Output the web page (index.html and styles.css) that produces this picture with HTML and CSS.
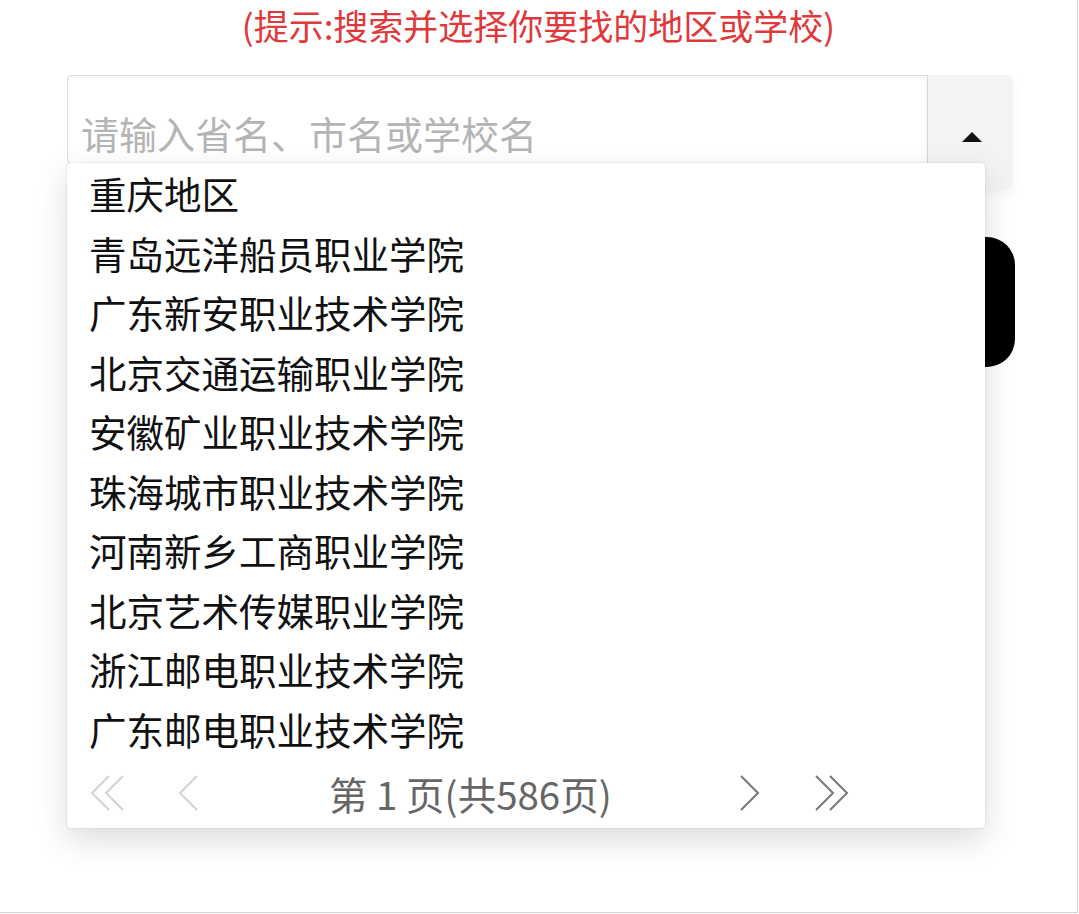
FILE: index.html
```html
<!DOCTYPE html>
<html lang="zh-CN">

<head>
    <meta charset="UTF-8">
    <meta name="viewport" content="width=device-width, initial-scale=1.0">
    <title>选择学校</title>
    <link rel="stylesheet" href="styles.css">
</head>

<body>
    <div class="page">
        <p class="hint">(提示:搜索并选择你要找的地区或学校)</p>

        <div class="picker">
            <div class="picker-row">
                <input type="text" class="picker-input" placeholder="请输入省名、市名或学校名">
                <button class="picker-toggle"><span class="caret"></span></button>
            </div>

            <button class="submit-btn"></button>

            <!-- 下拉列表 -->
            <div class="dropdown">
                <ul class="options">
                    <li>重庆地区</li>
                    <li>青岛远洋船员职业学院</li>
                    <li>广东新安职业技术学院</li>
                    <li>北京交通运输职业学院</li>
                    <li>安徽矿业职业技术学院</li>
                    <li>珠海城市职业技术学院</li>
                    <li>河南新乡工商职业学院</li>
                    <li>北京艺术传媒职业学院</li>
                    <li>浙江邮电职业技术学院</li>
                    <li>广东邮电职业技术学院</li>
                </ul>

                <div class="pager">
                    <span class="pager-btn first disabled">
                        <svg width="36" height="36" viewBox="0 0 36 36"><polyline points="19,1 2,18 19,35" /><polyline points="33,1 16,18 33,35" /></svg>
                    </span>
                    <span class="pager-btn prev disabled">
                        <svg width="20" height="36" viewBox="0 0 20 36"><polyline points="19,1 2,18 19,35" /></svg>
                    </span>
                    <span class="pager-text">第 1 页(共586页)</span>
                    <span class="pager-btn next">
                        <svg width="20" height="36" viewBox="0 0 20 36"><polyline points="1,1 18,18 1,35" /></svg>
                    </span>
                    <span class="pager-btn last">
                        <svg width="36" height="36" viewBox="0 0 36 36"><polyline points="3,1 20,18 3,35" /><polyline points="17,1 34,18 17,35" /></svg>
                    </span>
                </div>
            </div>
        </div>
    </div>
</body>

</html>
```

FILE: styles.css
```css
body {
    margin: 0;
    padding: 0;
    background-color: #fff;
    font-family: "Noto Sans CJK SC", "Noto Sans", sans-serif;
}

.page {
    box-sizing: border-box;
    width: 1078px;
    height: 913px;
    border-right: 1px solid #d4d4d4;
    border-bottom: 1px solid #d4d4d4;
    overflow: hidden;
}

.hint {
    margin: 0;
    padding-top: 4px;
    text-align: center;
    font-size: 35px;
    line-height: 42px;
    color: #e0393b;
}

.picker {
    position: relative;
    width: 948px;
    margin: 29px 0 0 67px;
}

.picker-row {
    display: flex;
    align-items: flex-start;
}

.picker-input {
    box-sizing: border-box;
    width: 861px;
    height: 89px;
    padding: 26px 13px 0;
    border: 1px solid #dcdcdc;
    border-radius: 4px 0 0 4px;
    font-family: inherit;
    font-size: 38px;
    color: #333;
    outline: none;
    box-shadow: inset 0 2px 3px rgba(0, 0, 0, 0.04);
}

.picker-input::placeholder {
    color: #b4b4b4;
}

.picker-toggle {
    width: 85px;
    height: 115px;
    padding: 57px 0 0 3px;
    border: none;
    border-radius: 0 8px 8px 0;
    background-color: #f3f3f3;
    box-shadow: 0 4px 10px rgba(0, 0, 0, 0.05);
    display: flex;
    justify-content: center;
    align-items: flex-start;
    box-sizing: border-box;
}

.caret {
    width: 0;
    height: 0;
    border-left: 10px solid transparent;
    border-right: 10px solid transparent;
    border-bottom: 10px solid #111;
}

.submit-btn {
    display: block;
    width: 948px;
    height: 130px;
    margin-top: 47px;
    border: none;
    border-radius: 28px;
    background-color: #000;
}

.dropdown {
    position: absolute;
    top: 88px;
    left: 0;
    width: 918px;
    height: 665px;
    background-color: #fff;
    border-radius: 4px;
    box-shadow: 0 0 2px rgba(0, 0, 0, 0.18), 0 12px 32px rgba(0, 0, 0, 0.14);
}

.options {
    list-style: none;
    margin: 0;
    padding: 0;
}

.options li {
    height: 59.5px;
    line-height: 59.5px;
    padding-left: 22px;
    font-size: 37.5px;
    color: #111;
}

.pager {
    display: flex;
    align-items: center;
    height: 70px;
    padding-left: 23px;
}

.pager-btn {
    display: flex;
    align-items: center;
}

.pager-btn svg polyline {
    fill: none;
    stroke: #777;
    stroke-width: 2;
}

.pager-btn.disabled svg polyline {
    stroke: #d2d2d2;
}

.pager-btn.prev {
    margin-left: 52px;
}

.pager-text {
    width: 411px;
    margin-left: 131px;
    font-size: 38.5px;
    color: #666;
}

.pager-btn.last {
    margin-left: 53px;
}
```
